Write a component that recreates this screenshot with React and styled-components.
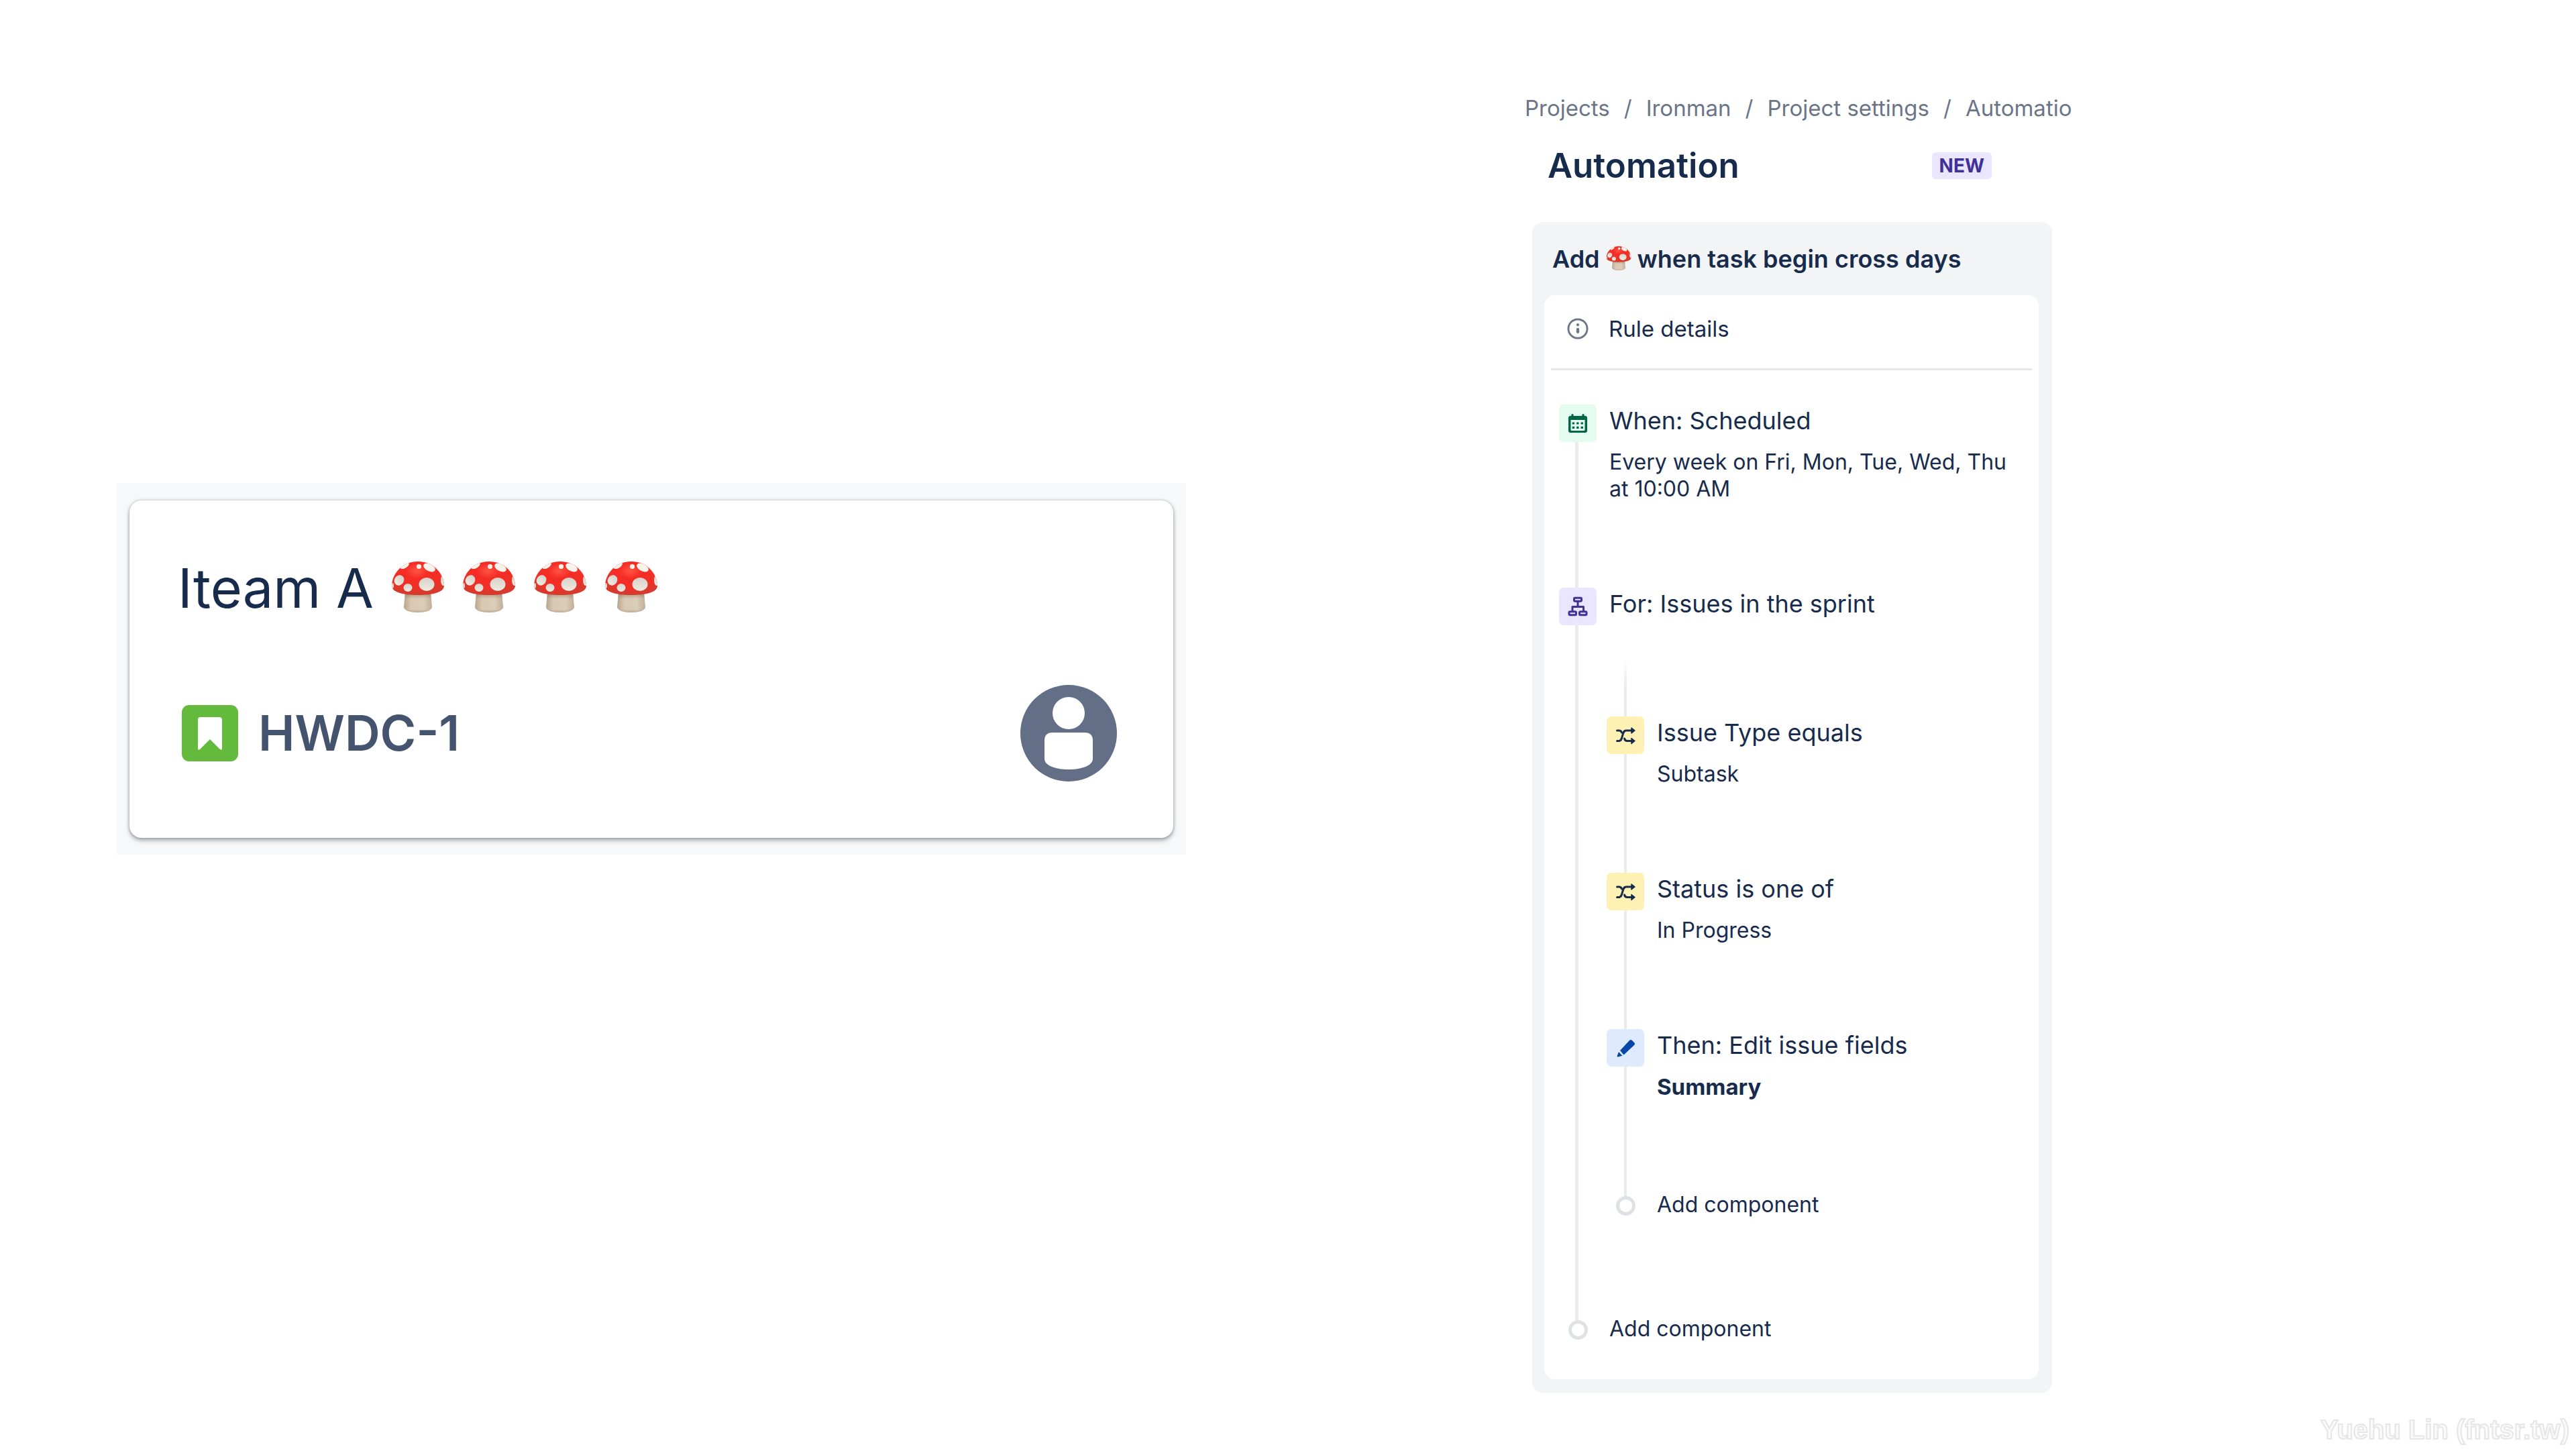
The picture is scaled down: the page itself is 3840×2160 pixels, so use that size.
import React, { useId } from "react";
import styled, { createGlobalStyle } from "styled-components";

const color = {
  text: "#172b4d",
  subtle: "#6b7588",
  issueKey: "#44546f",
  rail: "#ebebed",
  ring: "#dfe1e4",
  surface: "#ffffff",
  sunken: "#f3f4f6",
  board: "#f7f8f9",
};

const GlobalStyle = createGlobalStyle`
  *, *::before, *::after { box-sizing: border-box; }
  body {
    margin: 0;
    background: ${color.surface};
    color: ${color.text};
    font-family: Inter, "Liberation Sans", sans-serif;
  }
  h1, h2, h3, p, ol, ul { margin: 0; padding: 0; }
  ol, ul { list-style: none; }
  a { color: inherit; text-decoration: none; }
  button {
    padding: 0;
    border: 0;
    background: none;
    color: inherit;
    font: inherit;
    text-align: left;
    cursor: pointer;
  }
  svg { display: block; flex: none; }
`;

const Page = styled.main`
  display: grid;
  grid-template-columns: 1fr 1fr;
  min-height: 100vh;
`;

const BoardColumn = styled.section`
  padding: 720px 152px 0 174px;
`;

const Board = styled.div`
  padding: 26px 19px 25px 19px;
  background: ${color.board};
`;

const Card = styled.article`
  padding: 82px 84px 84px 72px;
  border-radius: 18px;
  background: ${color.surface};
  box-shadow: 0 4px 6px rgba(23, 35, 50, 0.34), 0 0 4px rgba(23, 35, 50, 0.26);
`;

const CardTitle = styled.h2`
  display: flex;
  align-items: center;
  gap: 26px;
  font-size: 81px;
  line-height: 98px;
  font-weight: 400;
`;

const CardFooter = styled.div`
  display: flex;
  align-items: center;
  gap: 24px;
  margin-top: 95px;
`;

const IssueKey = styled.a`
  flex: 1;
  color: ${color.issueKey};
  font-size: 73px;
  line-height: 88px;
  font-weight: 600;
`;

const RuleColumn = styled.section`
  padding: 141px 40px 84px 353px;
`;

const RuleLayout = styled.div`
  max-width: 786px;
`;

const Crumbs = styled.ol`
  display: flex;
  gap: 21px;
  white-space: nowrap;
  color: ${color.subtle};
  font-size: 33px;
  line-height: 40px;
`;

const Crumb = styled.li`
  display: flex;
  gap: 21px;

  & + &::before { content: "/"; }
`;

const RuleHeader = styled.header`
  display: flex;
  align-items: center;
  justify-content: space-between;
  margin-top: 34px;
  padding: 0 90px 0 34px;
`;

const PageTitle = styled.h1`
  font-size: 51px;
  line-height: 64px;
  font-weight: 600;
`;

const Badge = styled.span`
  padding: 0 11px;
  border-radius: 6px;
  background: #eae6ff;
  color: #403294;
  font-size: 28px;
  line-height: 40px;
  font-weight: 700;
`;

const Panel = styled.section`
  margin: 52px 0 0 11px;
  padding: 33px 20px 20px 18px;
  border-radius: 16px;
  background: ${color.sunken};
`;

const PanelTitle = styled.h2`
  display: flex;
  align-items: center;
  gap: 9px;
  padding: 0 12px 32px;
  font-size: 36px;
  line-height: 44px;
  font-weight: 600;
`;

const PanelBody = styled.div`
  padding: 0 10px 59px;
  border-radius: 16px;
  background: ${color.surface};
`;

const DetailsButton = styled.button`
  display: flex;
  align-items: center;
  gap: 30px;
  width: 100%;
  padding: 30px 24px 39px;
  border-bottom: 3px solid #e6e7e9;
  font-size: 33px;
  line-height: 40px;
`;

const Steps = styled.ol`
  padding: 51px 12px 0;
`;

const NestedSteps = styled.ol`
  margin: 58px 0 0 15px;
  padding-bottom: 13px;
`;

const StepItem = styled.li`
  display: flex;
`;

const Rail = styled.div`
  display: flex;
  flex: none;
  flex-direction: column;
  align-items: center;
  width: 56px;
`;

const RailLine = styled.div`
  flex: 1 0 ${(p) => p.$length || 0}px;
  width: ${(p) => (p.$nested ? 4 : 5)}px;
  margin-right: ${(p) => (p.$nested ? 0 : 3)}px;
  background: ${color.rail};
`;

const RailStart = styled.li`
  width: 4px;
  height: 86px;
  margin-left: 26px;
  background: linear-gradient(transparent, ${color.rail} 50%);
`;

const Tile = styled.div`
  border-radius: 7px;
  background: ${(p) => p.$bg};
  color: ${(p) => p.$fg};
`;

const StepBody = styled.div`
  flex: 1;
  padding-bottom: 127px;
`;

const StepText = styled.div`
  display: grid;
  gap: 18px;
  padding-left: 19px;
`;

const StepTitle = styled.h3`
  font-size: 36px;
  line-height: 48px;
  font-weight: 400;
`;

const StepDetail = styled.p`
  font-size: ${(p) => (p.$strong ? 33 : 32)}px;
  line-height: 40px;
  font-weight: ${(p) => (p.$strong ? 700 : 400)};
`;

const Ring = styled.span`
  flex: none;
  width: 29px;
  height: 29px;
  border: 5px solid ${color.ring};
  border-radius: 50%;
`;

const AddButton = styled.button`
  padding: 13px 0 0 19px;
  font-size: 32px;
  line-height: 32px;
`;

const Watermark = styled.footer`
  position: fixed;
  right: 10px;
  bottom: 6px;
  color: #fafafa;
  font-family: "Liberation Sans", sans-serif;
  font-size: 40px;
  line-height: 46px;
  font-weight: 700;
  -webkit-text-stroke: 2px #e6e6e6;
`;

function Mushroom({ size }) {
  const id = useId();
  return (
    <svg width={size} height={size} viewBox="0 2 80 80" role="img" aria-label="mushroom">
      <defs>
        <radialGradient id={`${id}cap`} cx="0.48" cy="0.3" r="0.62">
          <stop offset="0" stopColor="#ff5546" />
          <stop offset="0.35" stopColor="#f52c25" />
          <stop offset="0.8" stopColor="#f03028" />
          <stop offset="1" stopColor="#d9392c" />
        </radialGradient>
        <linearGradient id={`${id}stem`}>
          <stop offset="0" stopColor="#b8a48c" />
          <stop offset="0.25" stopColor="#d9c8b2" />
          <stop offset="0.7" stopColor="#dccdb9" />
          <stop offset="1" stopColor="#bfae98" />
        </linearGradient>
        <linearGradient id={`${id}shade`} x2="0" y2="1">
          <stop offset="0" stopColor="#6e4a35" stopOpacity="0.6" />
          <stop offset="0.35" stopColor="#8d745d" stopOpacity="0" />
          <stop offset="0.85" stopColor="#8d745d" stopOpacity="0" />
          <stop offset="1" stopColor="#8d745d" stopOpacity="0.4" />
        </linearGradient>
        <linearGradient id={`${id}spot`} x2="0" y2="1">
          <stop offset="0" stopColor="#d6d1c9" />
          <stop offset="1" stopColor="#f1ece2" />
        </linearGradient>
        <clipPath id={`${id}clip`}>
          <path d="M40 2C66 2 79 23 79 38C79 48 62 52 40 52S1 48 1 38C1 23 14 2 40 2Z" />
        </clipPath>
      </defs>
      <path d="M21 47H59L61 70C61 75 51 78 40 78S19 75 19 70Z" fill={`url(#${id}stem)`} />
      <path d="M21 47H59L61 70C61 75 51 78 40 78S19 75 19 70Z" fill={`url(#${id}shade)`} />
      <g clipPath={`url(#${id}clip)`}>
        <path d="M0 0H80V53H0Z" fill={`url(#${id}cap)`} />
        <g fill={`url(#${id}spot)`}>
          <ellipse cx="12" cy="30" rx="7" ry="8" transform="rotate(35 12 30)" />
          <ellipse cx="25" cy="41" rx="6.5" ry="6" />
          <ellipse cx="53" cy="36" rx="11.5" ry="10" />
          <ellipse cx="78" cy="30" rx="4" ry="8" />
          <ellipse cx="2" cy="38" rx="2" ry="4" />
        </g>
        <g fill="#f8f3ea">
          <ellipse cx="57" cy="11" rx="9.5" ry="5.5" transform="rotate(28 57 11)" />
          <ellipse cx="20" cy="8" rx="7.5" ry="4" transform="rotate(-30 20 8)" />
          <circle cx="41.5" cy="9.5" r="3.6" />
        </g>
      </g>
    </svg>
  );
}

const StoryIcon = () => (
  <svg width="96" height="96" viewBox="0 0 96 96" role="img" aria-label="Story">
    <rect x="6" y="6" width="84" height="84" rx="11" fill="#63ba3c" />
    <path
      d="M34 24H62Q66 24 66 28V71Q66 74 63 72L48 57L33 72Q30 74 30 71V28Q30 24 34 24Z"
      fill="#fff"
    />
  </svg>
);

const Avatar = () => (
  <svg width="144" height="144" viewBox="0 0 144 144" role="img" aria-label="Unassigned">
    <circle cx="72" cy="72" r="72" fill="#626f86" />
    <circle cx="72" cy="42" r="24" fill="#fff" />
    <path
      d="M48 71H96Q108 71 108 83V110C108 120 92 126 72 126S36 120 36 110V83Q36 71 48 71Z"
      fill="#fff"
    />
  </svg>
);

const InfoIcon = () => (
  <svg width="32" height="32" viewBox="0 0 33 33" fill="none" stroke="#6f768a" aria-hidden="true">
    <circle cx="16.5" cy="16.5" r="14.5" strokeWidth="3" />
    <path d="M16.5 17.5V21.5" strokeWidth="4.5" strokeLinecap="round" />
    <circle cx="16.5" cy="10.5" r="2.2" fill="#6f768a" stroke="none" />
  </svg>
);

const TileIcon = ({ children }) => (
  <svg width="56" height="56" viewBox="0 0 56 56" fill="none" stroke="currentColor" aria-hidden="true">
    {children}
  </svg>
);

const CalendarIcon = () => (
  <TileIcon>
    <path
      d="M17 17H39Q42 17 42 20V39Q42 42 39 42H17Q14 42 14 39V20Q14 17 17 17ZM17.5 23V37.5Q17.5 39 19 39H37Q38.5 39 38.5 37.5V23Z"
      fill="currentColor"
      fillRule="evenodd"
      stroke="none"
    />
    <path d="M20 15.5V19M36 15.5V19" strokeWidth="3.2" strokeLinecap="round" />
    <path d="M19.7 28H36M19.7 34.3H36" strokeWidth="3.2" strokeDasharray="3.4 3" />
  </TileIcon>
);

const BranchIcon = () => (
  <TileIcon>
    <g strokeWidth="3">
      <rect x="22.5" y="15.3" width="11" height="5" rx="1.5" />
      <rect x="15" y="35.8" width="10.5" height="5" rx="1.5" />
      <rect x="30.5" y="35.8" width="10.5" height="5" rx="1.5" />
      <path d="M28 21V28M20 35V28.5H36.5V35" strokeLinejoin="round" />
    </g>
  </TileIcon>
);

const ShuffleIcon = () => (
  <TileIcon>
    <g strokeWidth="3" strokeLinecap="round">
      <path d="M15.5 36.5H18.5C25 36.5 22 21 29 21H37" />
      <path d="M15.5 21H18.5Q21.5 21 22.5 24" />
      <path d="M26.5 33Q27.5 36.5 30.5 36.5H37" />
    </g>
    <g fill="currentColor" strokeWidth="1.5" strokeLinejoin="round">
      <path d="M37 17L42 21L37 25Z" />
      <path d="M37 32.5L42 36.5L37 40.5Z" />
    </g>
  </TileIcon>
);

const PencilIcon = () => (
  <TileIcon>
    <g fill="currentColor" stroke="none">
      <path d="M20 32L34 17Q36 15 38 17L41 20Q43 22 41 24L25.5 38.5Z" />
      <path d="M18 34L23.5 39.8L17 41.5Q15.5 42 15.7 40Z" />
    </g>
  </TileIcon>
);

const stepKinds = {
  trigger: { bg: "#e3fcef", fg: "#006644", Icon: CalendarIcon },
  branch: { bg: "#eae6ff", fg: "#403294", Icon: BranchIcon },
  condition: { bg: "#fff0b3", fg: "#172b4d", Icon: ShuffleIcon },
  action: { bg: "#deebff", fg: "#0747a6", Icon: PencilIcon },
};

function Step({ kind, title, detail, strong, nested, children }) {
  const { bg, fg, Icon } = stepKinds[kind];
  return (
    <StepItem>
      <Rail>
        <Tile $bg={bg} $fg={fg}>
          <Icon />
        </Tile>
        <RailLine $nested={nested} />
      </Rail>
      <StepBody>
        <StepText>
          <StepTitle>{title}</StepTitle>
          {detail && <StepDetail $strong={strong}>{detail}</StepDetail>}
        </StepText>
        {children}
      </StepBody>
    </StepItem>
  );
}

function AddStep({ nested }) {
  return (
    <StepItem>
      <Rail>
        <RailLine $nested={nested} $length={12} />
        <Ring />
      </Rail>
      <AddButton type="button">Add component</AddButton>
    </StepItem>
  );
}

const crumbs = ["Projects", "Ironman", "Project settings", "Automatio"];

const nestedSteps = [
  { kind: "condition", title: "Issue Type equals", detail: "Subtask" },
  { kind: "condition", title: "Status is one of", detail: "In Progress" },
  { kind: "action", title: "Then: Edit issue fields", detail: "Summary", strong: true },
];

export default function App() {
  return (
    <>
      <GlobalStyle />
      <Page>
        <BoardColumn>
          <Board>
            <Card>
              <CardTitle>
                Iteam A
                {[0, 1, 2, 3].map((n) => (
                  <Mushroom key={n} size={80} />
                ))}
              </CardTitle>
              <CardFooter>
                <StoryIcon />
                <IssueKey href="#HWDC-1">HWDC-1</IssueKey>
                <Avatar />
              </CardFooter>
            </Card>
          </Board>
        </BoardColumn>

        <RuleColumn>
          <RuleLayout>
            <nav aria-label="Breadcrumb">
              <Crumbs>
                {crumbs.map((name) => (
                  <Crumb key={name}>
                    <a href="#crumb">{name}</a>
                  </Crumb>
                ))}
              </Crumbs>
            </nav>
            <RuleHeader>
              <PageTitle>Automation</PageTitle>
              <Badge>NEW</Badge>
            </RuleHeader>
            <Panel>
              <PanelTitle>
                Add <Mushroom size={38} /> when task begin cross days
              </PanelTitle>
              <PanelBody>
                <DetailsButton type="button">
                  <InfoIcon />
                  Rule details
                </DetailsButton>
                <Steps>
                  <Step
                    kind="trigger"
                    title="When: Scheduled"
                    detail="Every week on Fri, Mon, Tue, Wed, Thu at 10:00 AM"
                  />
                  <Step kind="branch" title="For: Issues in the sprint">
                    <NestedSteps>
                      <RailStart aria-hidden="true" />
                      {nestedSteps.map((step) => (
                        <Step key={step.title} nested {...step} />
                      ))}
                      <AddStep nested />
                    </NestedSteps>
                  </Step>
                  <AddStep />
                </Steps>
              </PanelBody>
            </Panel>
          </RuleLayout>
        </RuleColumn>
      </Page>
      <Watermark>Yuehu Lin (fntsr.tw)</Watermark>
    </>
  );
}
